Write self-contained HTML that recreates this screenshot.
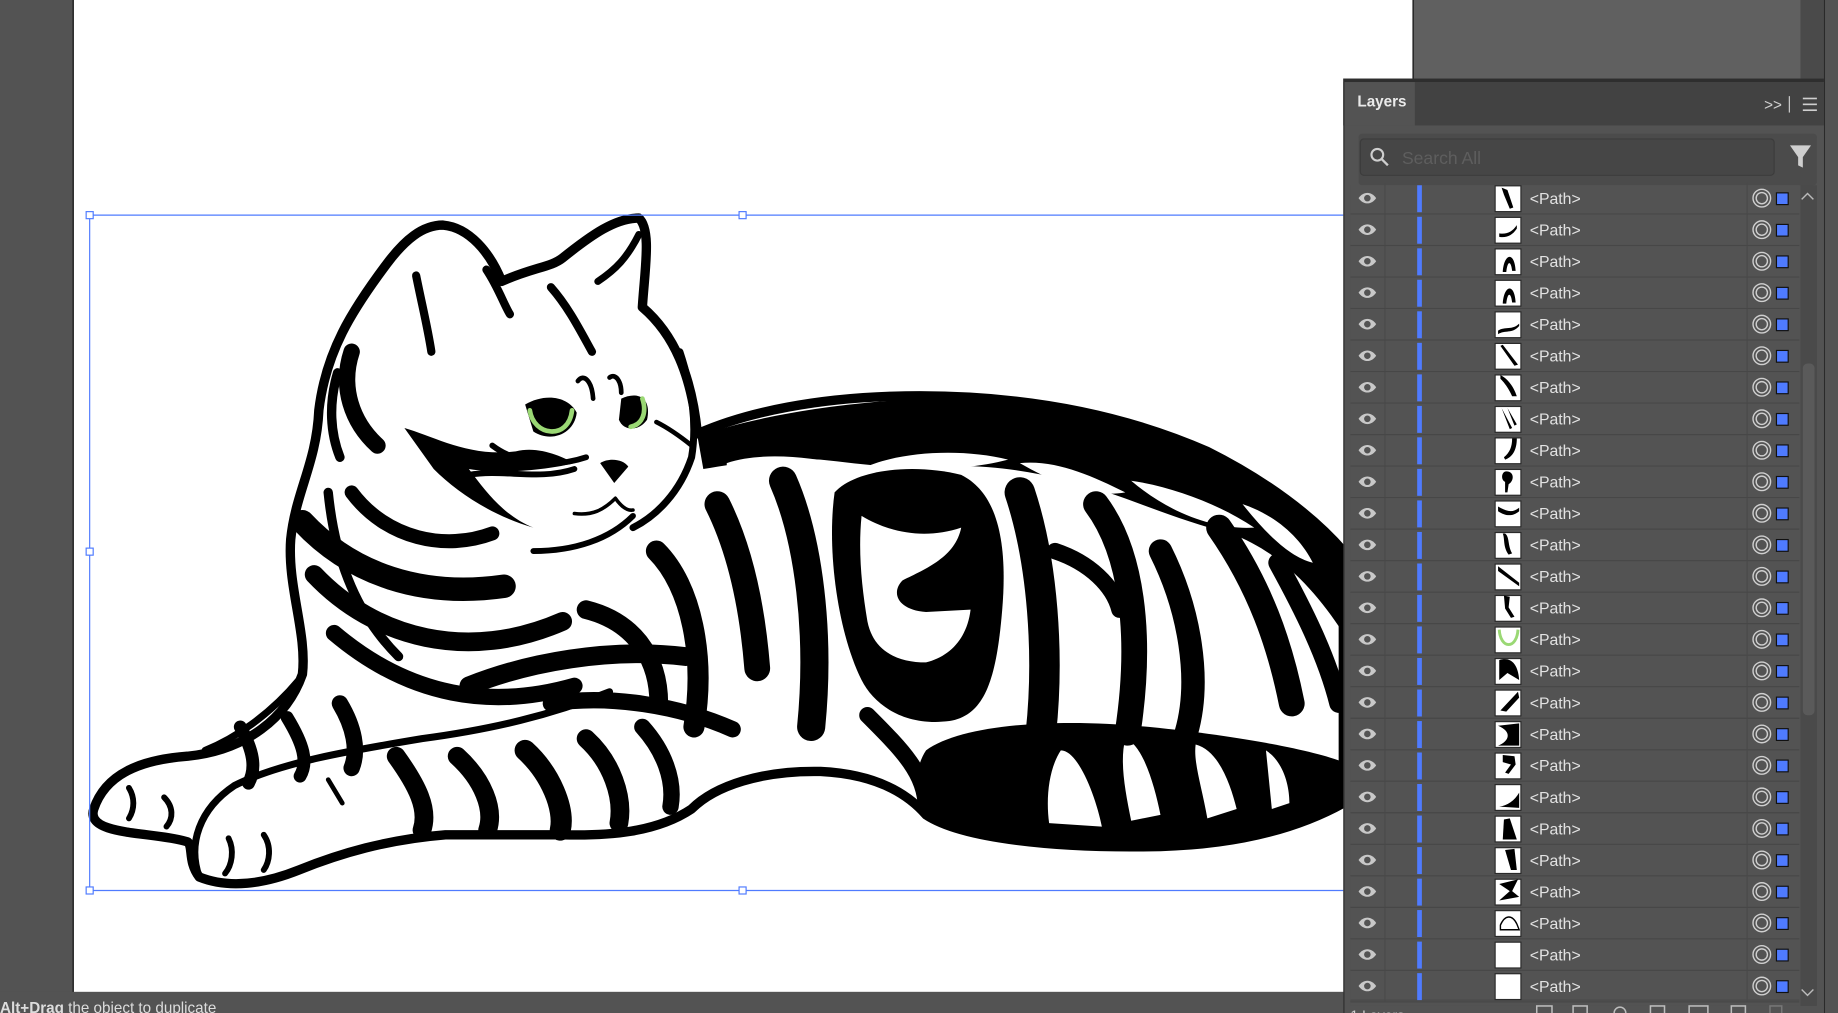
<!DOCTYPE html>
<html><head><meta charset="utf-8"><style>
html,body{margin:0;padding:0;background:#535353;overflow:hidden}
svg{display:block}
text{font-family:"Liberation Sans",sans-serif}
</style></head><body>
<svg width="1838" height="1013" viewBox="0 0 1568 864" preserveAspectRatio="none" xmlns="http://www.w3.org/2000/svg">
<rect x="0" y="0" width="1568" height="864" fill="#535353"/>
<rect x="62" y="0" width="1" height="846" fill="#000"/>
<rect x="63" y="0" width="1142" height="846" fill="#fff"/>
<rect x="1205" y="0" width="1" height="846" fill="#000"/>
<rect x="1206" y="0" width="330" height="67" fill="#606060"/>
<rect x="1536" y="0" width="20" height="67" fill="#4a4a4a"/>
<rect x="1556" y="0" width="1" height="864" fill="#2a2a2a"/>
<rect x="1557" y="0" width="11" height="864" fill="#535353"/>

<!-- CAT -->
<g stroke-linejoin="round" stroke-linecap="round">
<path d="M80,690 C90,660 120,648 160,645 C210,640 245,612 258,575 C262,540 245,500 248,460 C252,420 270,395 272,350 C278,300 300,265 330,225 C345,205 360,192 378,192 C400,194 418,215 428,240 C455,228 470,228 480,220 C505,200 525,186 545,186 C556,196 550,230 548,262 C575,285 590,320 595,370 C640,350 700,340 760,338 C860,335 950,350 1030,385 C1080,410 1120,440 1146,470 L1146,685 C1110,705 1060,720 990,722 C900,724 820,715 790,695 C770,672 740,660 700,658 C650,657 610,670 590,690 C560,710 520,713 480,712 L380,712 C330,716 290,728 255,742 C225,754 195,758 170,748 C160,735 165,722 160,718 C140,712 110,712 92,706 C80,702 78,696 80,690 Z" fill="#fff" stroke="#000" stroke-width="8"/>
<!-- upper arm line -->
<path d="M255,580 C230,610 200,630 175,640" fill="none" stroke="#000" stroke-width="6"/>
<path d="M170,748 C160,720 170,690 200,670 C240,650 300,640 360,630 C420,622 470,610 520,590" fill="none" stroke="#000" stroke-width="6"/>
<!-- back black band -->
<path d="M595,372 C660,350 760,336 860,340 C960,346 1050,388 1146,466 L1146,540 C1120,500 1090,470 1050,455 C1010,445 975,430 945,420 C900,405 850,395 800,398 C760,400 730,395 700,392 C660,390 630,395 600,400 Z" fill="#000"/>
<path d="M620,395 C650,385 690,390 720,396 C700,405 660,408 620,400 Z M735,400 C765,385 820,382 860,392 C830,400 790,402 735,400 Z M870,395 C900,392 930,405 960,420 C930,425 900,412 870,395 Z M965,410 C1000,415 1040,430 1070,450 C1040,452 1000,440 965,410 Z M1060,430 C1090,440 1110,460 1120,480 C1100,475 1080,455 1060,430 Z" fill="#fff"/>
<!-- C blob -->
<path d="M712,420 C730,400 780,395 820,405 C850,420 860,460 855,520 C850,580 840,610 810,615 C770,620 745,600 735,580 C715,540 705,470 712,420 Z" fill="#000"/>
<path d="M735,440 C760,455 790,460 820,450 C815,475 790,485 770,495 C760,505 765,520 790,522 L828,520 C825,545 810,560 790,565 C765,565 745,555 740,530 C735,500 732,470 735,440 Z" fill="#fff"/>
<!-- tail -->
<path d="M790,640 C820,618 900,612 980,620 C1060,628 1120,640 1146,650 L1146,688 C1110,706 1060,720 990,722 C900,724 820,715 795,698 C778,680 780,655 790,640 Z" fill="#000"/>
<path d="M905,640 C920,640 935,680 940,705 L895,702 C892,680 895,655 905,640 Z M960,630 C975,635 985,670 990,695 L965,700 C960,675 955,650 960,630 Z M1020,635 C1040,640 1050,670 1055,690 L1030,698 C1025,670 1018,650 1020,635 Z M1080,640 C1095,650 1100,670 1100,685 L1085,690 Z" fill="#fff"/>
<!-- body stripes -->
<g fill="none" stroke="#000">
<path d="M612,430 C632,470 642,520 646,570" stroke-width="22"/>
<path d="M668,410 C690,460 700,540 692,620" stroke-width="24"/>
<path d="M870,420 C890,480 895,560 888,625" stroke-width="26"/>
<path d="M935,430 C965,470 975,540 962,625" stroke-width="22"/>
<path d="M990,470 C1015,520 1025,580 1012,625" stroke-width="20"/>
<path d="M1040,450 C1075,500 1092,550 1102,600" stroke-width="22"/>
<path d="M1090,480 C1112,520 1132,560 1142,600" stroke-width="16"/>
<path d="M900,470 C930,480 950,500 955,520" stroke-width="14"/>
<path d="M560,470 C590,500 602,560 592,620" stroke-width="18"/>
<path d="M500,520 C540,530 562,560 562,600" stroke-width="16"/>
<path d="M740,610 C770,640 790,660 790,690" stroke-width="14"/>
<!-- neck/chest -->
<path d="M258,445 C300,490 360,510 430,500" stroke-width="20"/>
<path d="M268,490 C320,545 400,565 480,530" stroke-width="16"/>
<path d="M285,540 C350,595 420,605 490,585" stroke-width="14"/>
<path d="M400,585 C450,565 520,552 585,560" stroke-width="16"/>
<path d="M470,600 C520,592 580,602 625,622" stroke-width="14"/>
<path d="M300,420 C330,460 380,470 420,455" stroke-width="12"/>
<!-- legs -->
<path d="M290,600 C302,620 306,640 300,655" stroke-width="14"/>
<path d="M338,645 C356,670 366,690 360,708" stroke-width="16"/>
<path d="M390,645 C412,665 422,690 416,708" stroke-width="16"/>
<path d="M448,640 C470,660 482,690 478,708" stroke-width="18"/>
<path d="M500,630 C522,650 532,680 528,702" stroke-width="16"/>
<path d="M548,620 C566,640 576,665 572,688" stroke-width="14"/>
<path d="M205,620 C216,640 219,655 212,668" stroke-width="11"/>
<path d="M245,612 C259,635 263,650 256,662" stroke-width="11"/>
<path d="M280,665 L292,685" stroke-width="4"/>
<path d="M110,672 C115,680 115,690 110,698" stroke-width="5"/>
<path d="M140,680 C148,688 148,698 142,705" stroke-width="5"/>
<path d="M195,715 C200,725 198,738 192,745" stroke-width="5"/>
<path d="M225,712 C232,722 230,735 225,742" stroke-width="5"/>
<!-- head -->
<path d="M300,300 C290,330 300,360 322,380" stroke-width="14"/>
<path d="M288,318 C280,345 282,370 290,390" stroke-width="8"/>
<path d="M355,235 C360,260 365,280 368,300" stroke-width="7"/>
<path d="M415,230 C425,245 430,260 435,268" stroke-width="7"/>
<path d="M470,245 C485,262 495,282 505,300" stroke-width="7"/>
<path d="M510,240 C525,230 535,220 545,200" stroke-width="6"/>
<path d="M280,420 C285,470 300,520 340,560" stroke-width="8"/>
<path d="M455,470 C490,470 520,460 540,440" stroke-width="5"/>
<path d="M580,300 C590,330 595,360 590,390 C580,420 560,440 540,450" stroke-width="6"/>
<path d="M420,380 C440,395 470,400 500,390" stroke-width="5"/>
<path d="M400,405 C430,400 460,410 490,400" stroke-width="5"/>
<path d="M560,360 C570,365 580,372 590,380" stroke-width="4"/>
</g>
<path d="M345,365 C370,372 400,390 440,385 C460,380 480,390 490,395 C470,400 430,405 400,400 C415,420 430,440 455,450 C420,440 390,420 370,400 Z" fill="#000"/>
<!-- eyes -->
<path d="M448,345 C465,335 485,338 492,352 C490,370 470,378 455,368 Z" fill="#000"/>
<path d="M452,350 C455,372 485,376 488,350" fill="none" stroke="#9ad874" stroke-width="4"/>
<path d="M530,340 C545,333 556,340 552,358 C545,368 532,368 528,358 Z" fill="#000"/>
<path d="M548,340 C552,352 548,362 538,364" fill="none" stroke="#9ad874" stroke-width="4"/>
<path d="M512,395 C520,390 532,392 536,398 L524,412 Z" fill="#000"/>
<path d="M493,325 C498,318 505,325 506,340 M520,322 C525,318 530,325 530,335" fill="none" stroke="#000" stroke-width="4"/>
<path d="M490,438 C505,440 515,435 525,425 M525,425 C530,432 535,436 540,435" fill="none" stroke="#000" stroke-width="3"/>
</g>

<!-- selection -->
<g fill="none" stroke="#4f7bff" stroke-width="1">
<line x1="76" y1="183.5" x2="1146" y2="183.5"/>
<line x1="76" y1="759.5" x2="1146" y2="759.5"/>
<line x1="76.5" y1="183" x2="76.5" y2="759"/>
</g>
<g fill="#fff" stroke="#4f7bff" stroke-width="1">
<rect x="73.5" y="180.5" width="6" height="6"/><rect x="630.5" y="180.5" width="6" height="6"/>
<rect x="73.5" y="467.5" width="6" height="6"/><rect x="73.5" y="756.5" width="6" height="6"/><rect x="630.5" y="756.5" width="6" height="6"/>
</g>

<!-- status bar -->
<rect x="0" y="846" width="1146" height="18" fill="#535353"/>
<text x="0" y="864" font-size="13" fill="#dcdcdc"><tspan font-weight="bold">Alt+Drag</tspan> the object to duplicate</text>

<!-- PANEL -->
<rect x="1146" y="67" width="410" height="797" fill="#535353"/>
<rect x="1146" y="67" width="410" height="3" fill="#2e2e2e"/>
<rect x="1146" y="70" width="410" height="37" fill="#424242"/>
<rect x="1146" y="70" width="61" height="37" fill="#535353"/>
<rect x="1146" y="67" width="1" height="797" fill="#2e2e2e"/>
<text x="1158" y="91" font-size="13" font-weight="bold" fill="#eaeaea">Layers</text>
<text x="1505" y="94" font-size="13" fill="#cfcfcf">&gt;&gt;</text>
<rect x="1526" y="82" width="1" height="14" fill="#cfcfcf"/>
<g stroke="#cfcfcf" stroke-width="1.4"><line x1="1538" y1="84" x2="1550" y2="84"/><line x1="1538" y1="89" x2="1550" y2="89"/><line x1="1538" y1="94" x2="1550" y2="94"/></g>
<rect x="1159" y="114" width="391" height="44" rx="3" fill="#4b4b4b"/>
<rect x="1160.5" y="118.5" width="353" height="31" rx="3" fill="#464646" stroke="#3c3c3c"/>
<circle cx="1175" cy="132" r="5" fill="none" stroke="#cfcfcf" stroke-width="1.8"/>
<line x1="1179" y1="136" x2="1184" y2="141" stroke="#cfcfcf" stroke-width="2"/>
<text x="1196" y="140" font-size="15" fill="#5e5e5e">Search All</text>
<path d="M1527,124 L1545,124 L1538,134 L1538,143 L1534,141 L1534,134 Z" fill="#cfcfcf"/>
<rect x="1152" y="158" width="383" height="700" fill="#535353"/>
<rect x="1536" y="158" width="14" height="700" fill="#4a4a4a"/>
<rect x="1538" y="310" width="10" height="300" rx="4" fill="#5a5a5a"/>
<path d="M1537,170 L1542,165 L1547,170" fill="none" stroke="#bbb" stroke-width="1.2"/>
<path d="M1537,844 L1542,849 L1547,844" fill="none" stroke="#bbb" stroke-width="1.2"/>
<g>
<line x1="1152" y1="853" x2="1535" y2="853" stroke="#4a4a4a"/>
<text x="1152" y="870" font-size="12" fill="#cfcfcf">1 Layers</text>
<g fill="none" stroke="#bdbdbd" stroke-width="1.3">
<rect x="1311" y="858" width="13" height="8"/><rect x="1342" y="858" width="12" height="8"/><circle cx="1382" cy="864" r="5"/><rect x="1408" y="858" width="12" height="8"/><rect x="1441" y="858" width="16" height="8"/><rect x="1477" y="858" width="12" height="8"/><rect x="1510" y="858" width="10" height="8" stroke="#777"/>
</g>
</g>
<defs>
<g id="row">
<line x1="1152" y1="26.5" x2="1535" y2="26.5" stroke="#474747"/>
<line x1="1181.5" y1="0" x2="1181.5" y2="26" stroke="#4a4a4a"/>
<line x1="1490.5" y1="0" x2="1490.5" y2="26" stroke="#4a4a4a"/>
<path d="M1159,13 C1163,7 1170,7 1174,13 C1170,19 1163,19 1159,13 Z" fill="#c8c8c8"/>
<circle cx="1166.5" cy="13" r="2.8" fill="#535353"/>
<rect x="1209" y="2" width="4" height="23" fill="#4f7bff"/>
<rect x="1275.5" y="2.5" width="22" height="22" fill="#fff" stroke="#2a2a2a"/>
<circle cx="1503" cy="13" r="7.5" fill="none" stroke="#cfcfcf" stroke-width="1.2"/>
<circle cx="1503" cy="13" r="4.8" fill="none" stroke="#cfcfcf" stroke-width="1.2"/>
<rect x="1515.5" y="8.5" width="10" height="10" fill="#4f7bff" stroke="#111"/>
</g>
</defs>
<g font-size="13.5" fill="#e2e2e2">
<g transform="translate(0,156)"><use href="#row"/><text x="1305" y="18">&lt;Path&gt;</text></g>
<g transform="translate(0,182.9)"><use href="#row"/><text x="1305" y="18">&lt;Path&gt;</text></g>
<g transform="translate(0,209.8)"><use href="#row"/><text x="1305" y="18">&lt;Path&gt;</text></g>
<g transform="translate(0,236.6)"><use href="#row"/><text x="1305" y="18">&lt;Path&gt;</text></g>
<g transform="translate(0,263.5)"><use href="#row"/><text x="1305" y="18">&lt;Path&gt;</text></g>
<g transform="translate(0,290.4)"><use href="#row"/><text x="1305" y="18">&lt;Path&gt;</text></g>
<g transform="translate(0,317.3)"><use href="#row"/><text x="1305" y="18">&lt;Path&gt;</text></g>
<g transform="translate(0,344.2)"><use href="#row"/><text x="1305" y="18">&lt;Path&gt;</text></g>
<g transform="translate(0,371.0)"><use href="#row"/><text x="1305" y="18">&lt;Path&gt;</text></g>
<g transform="translate(0,397.9)"><use href="#row"/><text x="1305" y="18">&lt;Path&gt;</text></g>
<g transform="translate(0,424.8)"><use href="#row"/><text x="1305" y="18">&lt;Path&gt;</text></g>
<g transform="translate(0,451.7)"><use href="#row"/><text x="1305" y="18">&lt;Path&gt;</text></g>
<g transform="translate(0,478.6)"><use href="#row"/><text x="1305" y="18">&lt;Path&gt;</text></g>
<g transform="translate(0,505.4)"><use href="#row"/><text x="1305" y="18">&lt;Path&gt;</text></g>
<g transform="translate(0,532.3)"><use href="#row"/><text x="1305" y="18">&lt;Path&gt;</text></g>
<g transform="translate(0,559.2)"><use href="#row"/><text x="1305" y="18">&lt;Path&gt;</text></g>
<g transform="translate(0,586.1)"><use href="#row"/><text x="1305" y="18">&lt;Path&gt;</text></g>
<g transform="translate(0,613.0)"><use href="#row"/><text x="1305" y="18">&lt;Path&gt;</text></g>
<g transform="translate(0,639.8)"><use href="#row"/><text x="1305" y="18">&lt;Path&gt;</text></g>
<g transform="translate(0,666.7)"><use href="#row"/><text x="1305" y="18">&lt;Path&gt;</text></g>
<g transform="translate(0,693.6)"><use href="#row"/><text x="1305" y="18">&lt;Path&gt;</text></g>
<g transform="translate(0,720.5)"><use href="#row"/><text x="1305" y="18">&lt;Path&gt;</text></g>
<g transform="translate(0,747.4)"><use href="#row"/><text x="1305" y="18">&lt;Path&gt;</text></g>
<g transform="translate(0,774.2)"><use href="#row"/><text x="1305" y="18">&lt;Path&gt;</text></g>
<g transform="translate(0,801.1)"><use href="#row"/><text x="1305" y="18">&lt;Path&gt;</text></g>
<g transform="translate(0,828.0)"><use href="#row"/><text x="1305" y="18">&lt;Path&gt;</text></g>
</g>
<!-- thumbnail glyphs -->
<g fill="#000">
<path d="M1281,160 L1286,162 L1291,177 L1288,178 L1283,166 Z"/>
<path d="M1279,199 C1285,200 1290,198 1294,192 L1294,195 C1290,201 1285,203 1279,202 Z"/>
<path d="M1282,232 C1283,216 1292,214 1293,231 L1290,231 C1289,222 1286,222 1285,232 Z"/>
<path d="M1282,259 C1283,243 1292,241 1293,258 L1290,258 C1289,249 1286,249 1285,259 Z"/>
<path d="M1278,282 C1284,278 1290,282 1296,276 L1296,278 C1290,285 1284,281 1278,285 Z"/>
<path d="M1280,295 L1282,294 L1295,311 L1292,312 Z"/>
<path d="M1280,320 C1288,324 1292,332 1294,338 L1290,338 C1287,331 1283,326 1280,323 Z"/>
<path d="M1281,348 L1290,365 L1288,366 Z M1286,348 L1294,362 L1292,363 Z"/>
<path d="M1290,374 L1294,374 C1294,384 1290,390 1284,392 L1283,390 C1288,386 1290,381 1290,374 Z"/>
<path d="M1285,402 C1292,402 1292,410 1287,413 L1286,420 L1284,420 L1284,411 C1280,409 1281,402 1285,402 Z"/>
<path d="M1278,432 C1285,436 1290,438 1296,433 L1296,436 C1290,441 1284,440 1278,436 Z"/>
<path d="M1284,455 C1288,458 1286,465 1290,472 L1287,473 C1282,466 1284,460 1282,455 Z"/>
<path d="M1278,483 L1296,497 L1296,500 L1278,487 Z"/>
<path d="M1283,508 L1288,509 L1287,518 L1292,526 L1289,527 L1284,519 Z"/>
<path d="M1279,563 C1288,560 1295,565 1296,580 L1286,574 L1279,580 Z"/>
<path d="M1280,606 L1295,590 L1296,595 L1285,607 Z"/>
<path d="M1278,619 L1296,617 L1296,636 L1278,636 C1288,632 1290,624 1278,619 Z"/>
<path d="M1282,644 L1292,645 L1293,652 L1287,660 L1284,659 L1289,652 L1282,650 Z"/>
<path d="M1279,688 C1286,687 1292,683 1296,676 L1296,689 Z"/>
<path d="M1283,699 L1288,698 L1294,716 L1282,716 Z"/>
<path d="M1284,725 L1292,724 L1294,742 L1289,742 Z"/>
<path d="M1279,754 L1295,750 L1290,760 L1296,765 L1279,768 L1288,760 Z"/>
<path d="M1280,789 C1284,780 1290,780 1294,788 L1296,793 L1280,793 Z" fill="none" stroke="#000" stroke-width="1.2"/>
</g>
<path d="M1279,537 C1280,554 1294,554 1295,537" fill="none" stroke="#9ad874" stroke-width="2.5"/>
</svg>
</body></html>
